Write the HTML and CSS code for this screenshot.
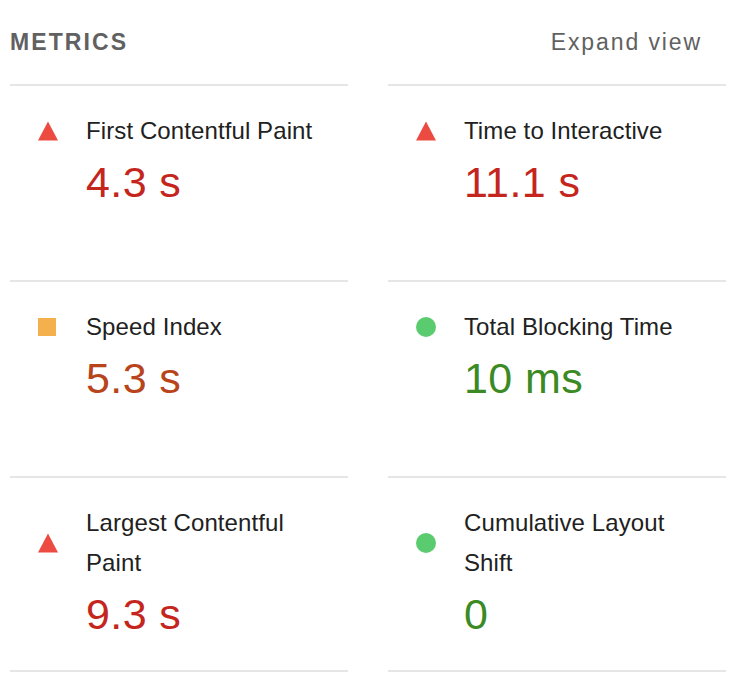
FILE: index.html
```html
<!DOCTYPE html>
<html lang="en">
  <head>
    <meta charset="UTF-8" />
    <meta name="viewport" content="width=device-width, initial-scale=1.0" />
    <title>Metrics</title>
    <link rel="stylesheet" href="styles.css">
  </head>
  <body>
    <!-- metrics group -->
    <div class="metrics">
      <div class="metrics-header">
        <span class="metrics-title">Metrics</span>
        <span class="metrics-toggle">Expand view</span>
      </div>

      <div class="metrics-grid">
        <div class="metric fail">
          <svg class="metric-icon" viewBox="0 0 20 20"><polygon points="10,0.5 20,19.5 0,19.5" /></svg>
          <div class="metric-title">First Contentful Paint</div>
          <div class="metric-value">4.3 s</div>
        </div>
        <div class="metric fail">
          <svg class="metric-icon" viewBox="0 0 20 20"><polygon points="10,0.5 20,19.5 0,19.5" /></svg>
          <div class="metric-title">Time to Interactive</div>
          <div class="metric-value">11.1 s</div>
        </div>

        <div class="metric average">
          <svg class="metric-icon" viewBox="0 0 20 20"><rect x="0" y="1" width="18" height="18" /></svg>
          <div class="metric-title">Speed Index</div>
          <div class="metric-value">5.3 s</div>
        </div>
        <div class="metric pass">
          <svg class="metric-icon" viewBox="0 0 20 20"><circle cx="10" cy="10" r="10" /></svg>
          <div class="metric-title">Total Blocking Time</div>
          <div class="metric-value">10 ms</div>
        </div>

        <div class="metric fail last">
          <svg class="metric-icon" viewBox="0 0 20 20"><polygon points="10,0.5 20,19.5 0,19.5" /></svg>
          <div class="metric-title">Largest Contentful Paint</div>
          <div class="metric-value">9.3 s</div>
        </div>
        <div class="metric pass last">
          <svg class="metric-icon" viewBox="0 0 20 20"><circle cx="10" cy="10" r="10" /></svg>
          <div class="metric-title">Cumulative Layout Shift</div>
          <div class="metric-value">0</div>
        </div>
      </div>
    </div>
  </body>
</html>
```

FILE: styles.css
```css
:root {
  --text-color: #212121;
  --header-color: #616161;
  --divider-color: #e6e6e6;

  --fail-icon: #ec4b42;
  --fail-text: #c4261d;
  --average-icon: #f5b04e;
  --average-text: #b8441c;
  --pass-icon: #5bcb70;
  --pass-text: #3b8a23;
}

body {
  margin: 0;
  background: #fff;
  color: var(--text-color);
  font-family: "Liberation Sans", Arial, sans-serif;
}

.metrics {
  padding: 0 18px 0 10px;
}

/* ------- header with title and toggle */
.metrics-header {
  display: flex;
  justify-content: space-between;
  align-items: center;
  padding: 27px 24px 27px 0;
  font-size: 23px;
  line-height: 30px;
  color: var(--header-color);
}

.metrics-title {
  font-weight: bold;
  text-transform: uppercase;
  letter-spacing: 2.1px;
}

.metrics-toggle {
  letter-spacing: 1.9px;
}

/* ------- two column grid of metrics */
.metrics-grid {
  display: grid;
  grid-template-columns: 1fr 1fr;
  column-gap: 40px;
}

.metric {
  box-sizing: border-box;
  min-height: 196px;
  border-top: 2px solid var(--divider-color);
  padding: 25px 20px 0 28px;
  display: grid;
  grid-template-columns: 20px 1fr;
  column-gap: 28px;
  align-items: center;
  align-content: start;
}

.metric.last {
  border-bottom: 2px solid var(--divider-color);
}

.metric-icon {
  width: 20px;
  height: 20px;
  display: block;
}

.metric-title {
  font-size: 24px;
  line-height: 40px;
  letter-spacing: 0.1px;
}

.metric-value {
  grid-column: 2;
  margin-top: 6px;
  font-size: 43px;
  line-height: 50px;
  letter-spacing: 0.4px;
}

/* ------- ratings */
.fail .metric-icon { fill: var(--fail-icon); }
.fail .metric-value { color: var(--fail-text); }

.average .metric-icon { fill: var(--average-icon); }
.average .metric-value { color: var(--average-text); }

.pass .metric-icon { fill: var(--pass-icon); }
.pass .metric-value { color: var(--pass-text); }
```
